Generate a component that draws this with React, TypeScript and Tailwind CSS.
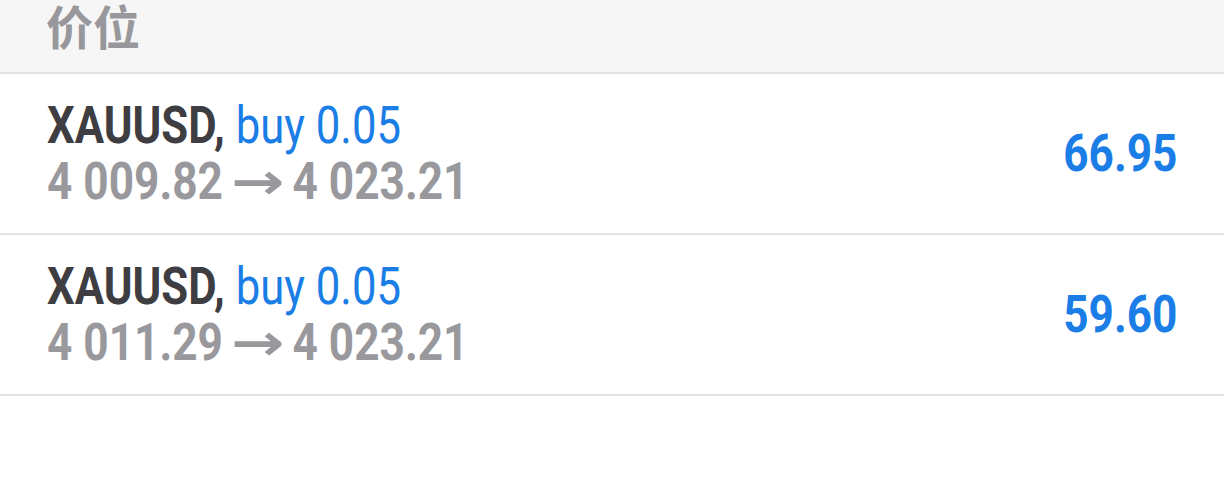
const trades = [
  { symbol: 'XAUUSD,', side: 'buy 0.05', open: '4 009.82', close: '4 023.21', profit: '66.95' },
  { symbol: 'XAUUSD,', side: 'buy 0.05', open: '4 011.29', close: '4 023.21', profit: '59.60' },
];

function TradeRow({ t }: any) {
  return (
    <div className="flex h-[161px] items-center justify-between border-b-2 border-[#e3e3e5] pl-[47px] pr-[47px]">
      <div className="flex flex-col text-[52px] leading-[56px]">
        <div className="origin-left scale-x-[0.84] whitespace-nowrap">
          <span className="font-bold text-[#3e3d42]">{t.symbol}</span>{' '}
          <span className="text-[#1a7ee6]">{t.side}</span>
        </div>
        <div className="origin-left scale-x-[0.85] whitespace-nowrap font-bold text-[#98989d]">
          {t.open}{' '}
          <span className="mx-[7px] inline-block scale-x-[1.5] font-['DejaVu_Sans'] text-[50px]">→</span>{' '}
          {t.close}
        </div>
      </div>
      <div className="origin-right scale-x-[0.85] text-[52px] font-bold leading-[56px] text-[#1a7ee6]">
        {t.profit}
      </div>
    </div>
  );
}

export default function App() {
  return (
    <div className="h-[502px] w-[1224px] overflow-hidden bg-white font-['Roboto','Noto_Sans_CJK_SC',sans-serif]">
      <div className="h-[74px] border-b-2 border-[#e3e3e5] bg-[#f6f6f6] pl-[46px]">
        <div className="text-[47px] font-bold leading-[58px] text-[#98989c]">价位</div>
      </div>
      {trades.map((t, i) => (
        <TradeRow key={i} t={t} />
      ))}
    </div>
  );
}
